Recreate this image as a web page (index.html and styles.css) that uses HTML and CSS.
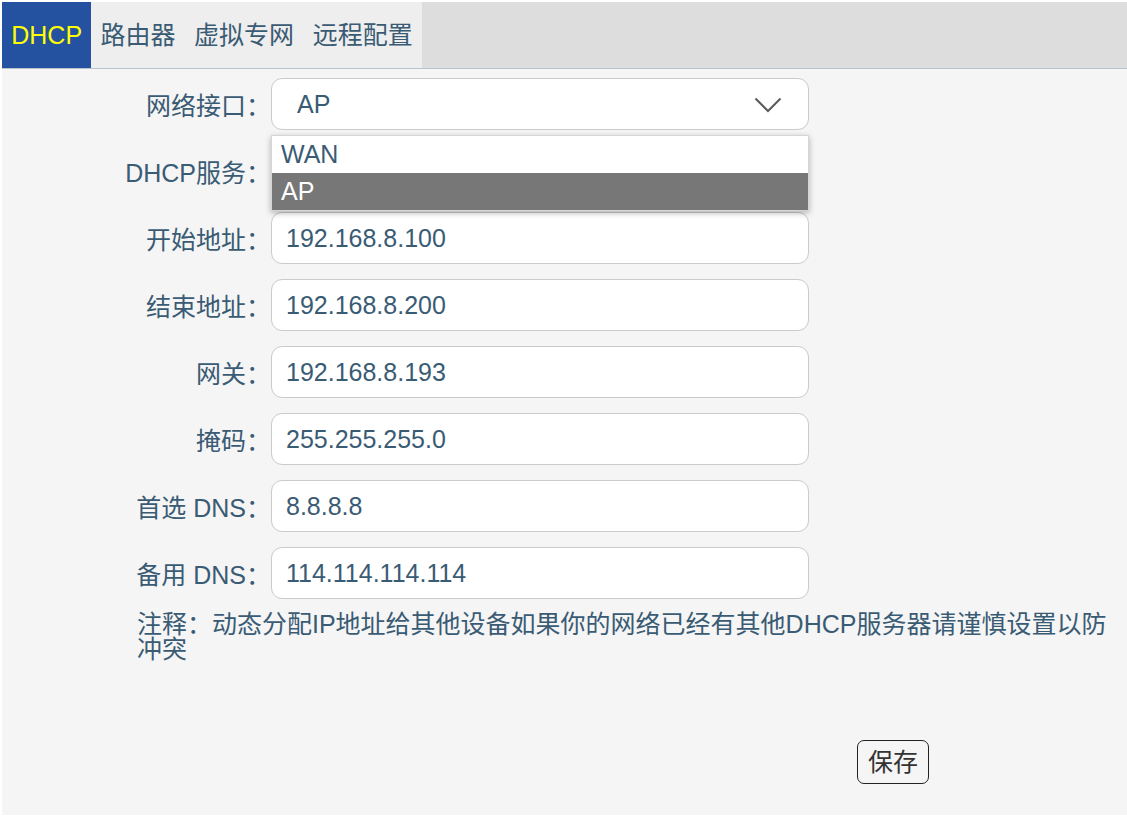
FILE: index.html
```html
<!DOCTYPE html>
<html lang="zh-CN">
<head>
<meta charset="utf-8">
<title>DHCP</title>
<link rel="stylesheet" href="styles.css">
</head>
<body>
<div class="page">
  <nav class="tabs">
    <div class="tab active">DHCP</div>
    <div class="tab">路由器</div>
    <div class="tab">虚拟专网</div>
    <div class="tab">远程配置</div>
  </nav>
  <main class="content">
    <div class="form">
      <label class="label">网络接口：</label>
      <div class="select-wrap">
        <div class="field select">
          <span>AP</span>
          <svg class="chevron" width="28" height="16" viewBox="0 0 28 16"><polyline points="1.5,1.5 14,14 26.5,1.5" fill="none" stroke="#5a5a5a" stroke-width="2"/></svg>
        </div>
        <ul class="dropdown">
          <li class="option">WAN</li>
          <li class="option selected">AP</li>
        </ul>
      </div>

      <label class="label">DHCP服务：</label>
      <div class="field select"></div>

      <label class="label">开始地址：</label>
      <input class="field" value="192.168.8.100">

      <label class="label">结束地址：</label>
      <input class="field" value="192.168.8.200">

      <label class="label">网关：</label>
      <input class="field" value="192.168.8.193">

      <label class="label">掩码：</label>
      <input class="field" value="255.255.255.0">

      <label class="label">首选 DNS：</label>
      <input class="field" value="8.8.8.8">

      <label class="label">备用 DNS：</label>
      <input class="field" value="114.114.114.114">
    </div>
    <p class="note">注释：动态分配IP地址给其他设备如果你的网络已经有其他DHCP服务器请谨慎设置以防冲突</p>
    <div class="actions">
      <button class="save">保存</button>
    </div>
  </main>
</div>
</body>
</html>
```
FILE: styles.css
```css
* { box-sizing: border-box; }

html, body {
  margin: 0;
  padding: 0;
  background: #ffffff;
}

body {
  padding: 2px 0 2px 2px;
  font-family: "Liberation Sans", "Noto Sans CJK SC", sans-serif;
  font-size: 25px;
  color: #3a5b74;
}

.page {
  display: flex;
  flex-direction: column;
  height: 813px;
}

.tabs {
  display: flex;
  height: 67px;
  background: #dcdddc;
  border-bottom: 1px solid #b9c3cc;
  flex: none;
}

.tab {
  display: flex;
  align-items: center;
  padding: 0 9.25px;
  background: #eeeeee;
  color: #3a5b74;
  line-height: 1;
}

.tab.active {
  background: #2451a0;
  color: #ffff00;
}

.content {
  flex: 1;
  background: #f5f5f5;
  padding-top: 9px;
}

.form {
  display: grid;
  grid-template-columns: 269px 538px;
  grid-auto-rows: 52px;
  row-gap: 15px;
}

.label {
  display: flex;
  align-items: center;
  justify-content: flex-end;
  white-space: nowrap;
  color: #3a5b74;
}

.field {
  width: 538px;
  height: 52px;
  margin: 0;
  border: 1px solid #cacacf;
  border-radius: 11px;
  background: #ffffff;
  font: inherit;
  color: #3a5b74;
  padding: 0 14px;
  outline: none;
}

.select {
  display: flex;
  align-items: center;
  justify-content: space-between;
  padding: 0 26px 0 25px;
}

.select-wrap {
  position: relative;
}

.chevron {
  display: block;
  margin-top: 2px;
}

.dropdown {
  position: absolute;
  left: 0;
  top: 57px;
  width: 538px;
  margin: 0;
  padding: 0;
  list-style: none;
  background: #ffffff;
  border: 1px solid #d6d6d6;
  box-shadow: 0 2px 6px rgba(0, 0, 0, 0.28);
  z-index: 5;
}

.option {
  height: 37px;
  line-height: 37px;
  padding: 0 9px;
  color: #3a5b74;
}

.option.selected {
  background: #777777;
  color: #ffffff;
}

.note {
  margin: 13px 0 0 135px;
  padding-right: 12px;
  line-height: 25px;
  color: #3a5b74;
}

.actions {
  margin: 78px 0 0 855px;
}

.save {
  font: inherit;
  color: #333333;
  background: transparent;
  border: 1px solid #222222;
  border-radius: 7px;
  height: 44px;
  padding: 0 10px;
  line-height: 1;
}
```
